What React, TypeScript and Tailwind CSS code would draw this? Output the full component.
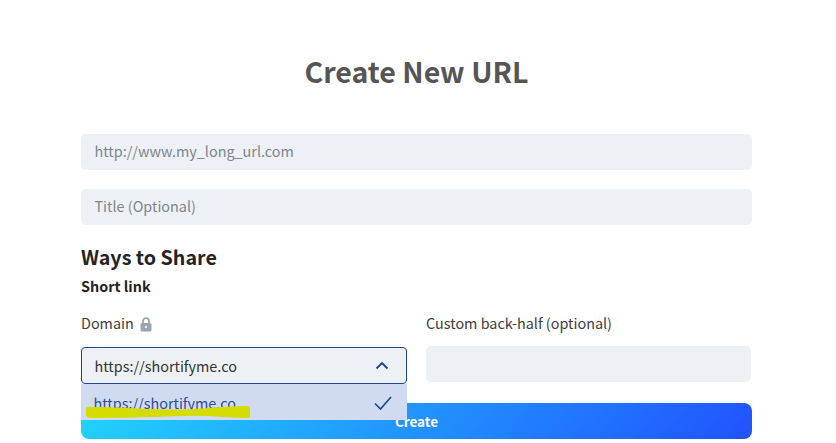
import React from "react";

export default function App() {
  return (
    <div className="h-[443px] w-[836px] overflow-hidden bg-white pl-[81px] pr-[84px] [font-family:'Noto_Sans_CJK_SC','Noto_Sans',sans-serif]">
      <h1 className="h-[134px] pt-[51px] text-center text-[28.5px] leading-[40px] font-bold text-[#555555]">Create New URL</h1>
      <div className="flex h-[36px] items-center rounded-[5px] bg-[#edf1f5] pl-[13.5px] pb-[3px] text-[14.4px] text-[#7e858c]">http://www.my_long_url.com</div>
      <div className="mt-[19px] flex h-[36px] items-center rounded-[5px] bg-[#edf1f5] pl-[13.5px] pb-[3px] text-[14.4px] text-[#7e858c]">Title (Optional)</div>
      <h2 className="mt-[19px] text-[19.7px] leading-[26px] font-bold text-[#25221f]">Ways to Share</h2>
      <h3 className="mt-[5px] text-[14.4px] leading-[22px] font-bold text-[#25221f]">Short link</h3>
      <div className="mt-[15px] grid grid-cols-[326px_325px] gap-x-[19px]">
        <div className="relative">
          <div className="flex h-[24px] items-center gap-[6px] pb-[2px] text-[14.4px] text-[#3d3d3d]">
            Domain
            <svg width="12" height="15" viewBox="0 0 12 15" className="mt-[3px]" aria-hidden="true">
              <path d="M3 6.5V4.2a3 3 0 0 1 6 0v2.3" fill="none" stroke="#9aa3b0" strokeWidth="1.7" />
              <rect x="0.5" y="6" width="11" height="8.5" rx="1.6" fill="#9aa3b0" />
              <circle cx="6" cy="10" r="1.2" fill="#eef0f3" />
            </svg>
          </div>
          <div className="mt-[11px] flex h-[37px] items-center justify-between rounded-[4px] border border-[#1f4597] bg-[#edf1f5] pl-[12.5px] pr-[17px] text-[14.4px] text-[#333333]">
            https://shortifyme.co
            <svg width="14" height="9" viewBox="0 0 14 9" aria-hidden="true">
              <path d="M1.5 7.5 7 2l5.5 5.5" fill="none" stroke="#1f4597" strokeWidth="1.9" />
            </svg>
          </div>
          <div className="absolute left-0 top-[72px] z-10 flex h-[36px] w-[326px] items-center justify-between bg-[#d0dbf2] pt-[1px] pl-[12.5px] pr-[15px] text-[14.4px] text-[#2f4a9c]">
            https://shortifyme.co
            <svg width="18" height="14" viewBox="0 0 18 14" aria-hidden="true">
              <path d="M1 7.5 6.5 13 17 1" fill="none" stroke="#1f4597" strokeWidth="1.7" />
            </svg>
          </div>
          <svg className="absolute left-[4px] top-[87px] z-20" width="166" height="20" viewBox="0 0 166 20" aria-hidden="true">
            <path d="M1 9Q3 7 8 8C34 8 52 10 84 10.500c26 .5 46-3 79-3.500q2 0 2 2v9q-1 1-4 1c-22 0-42-3-62-2-30 1-68 2-94 2q-3 0-4-2Z" fill="#d5dc00" />
          </svg>
        </div>
        <div>
          <div className="flex h-[24px] items-center pb-[2px] text-[14.4px] text-[#3d3d3d]">Custom back-half (optional)</div>
          <div className="mt-[10px] h-[36px] rounded-[5px] bg-[#edf1f5]" />
        </div>
      </div>
      <div className="mt-[19px] flex h-[36px] items-center justify-center rounded-[8px] bg-[linear-gradient(310deg,#2152ff,#21d4fd)] text-[13.5px] font-bold text-white">Create</div>
    </div>
  );
}
